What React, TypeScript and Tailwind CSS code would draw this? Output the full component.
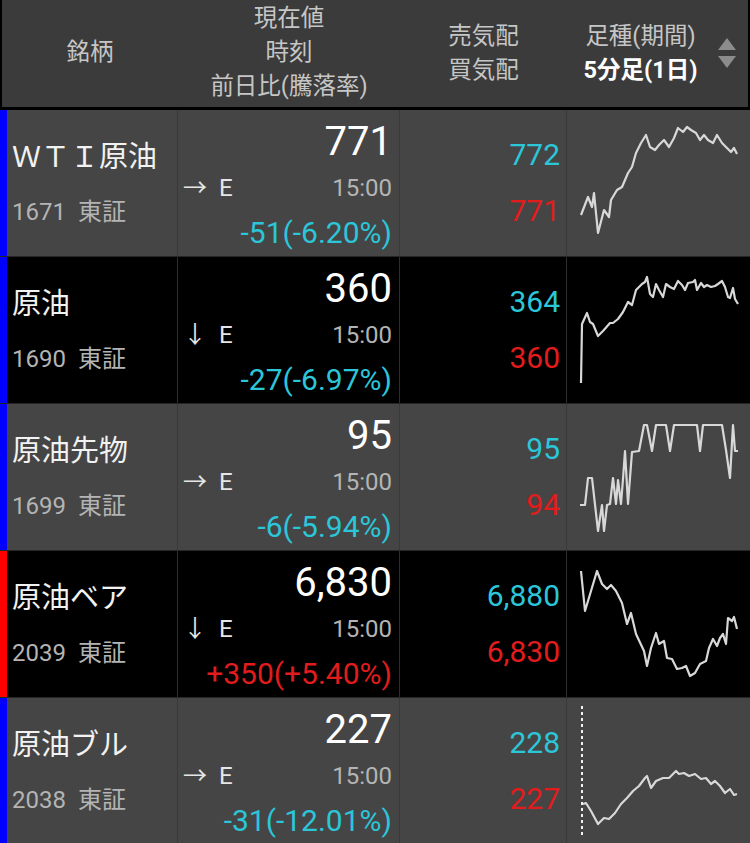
import React from 'react';

type Row = {
  name: string;
  code: string;
  price: string;
  arrow: string;
  change: string;
  up: boolean;
  ask: string;
  bid: string;
  dark: boolean;
  bar: string;
  top: number;
  points: number[][];
  dotted?: boolean;
};

const rows: Row[] = [
  {
    name: 'ＷＴＩ原油',
    code: '1671',
    price: '771',
    arrow: '→',
    change: '-51(-6.20%)',
    up: false,
    ask: '772',
    bid: '771',
    dark: false,
    bar: 'bg-[#0000ff]',
    top: 110,
    points: [
      [581, 215], [588, 197], [592, 207], [594, 193], [598, 233], [604, 210], [609, 217], [611, 200],
      [617, 190], [622, 187], [628, 173], [632, 167], [636, 153], [641, 143], [646, 135], [650, 147],
      [655, 150], [659, 145], [664, 140], [669, 147], [674, 138], [678, 128], [683, 132], [687, 127],
      [691, 130], [696, 133], [700, 140], [704, 135], [708, 140], [713, 143], [717, 135], [722, 143],
      [726, 147], [731, 152], [734, 148], [737, 154],
    ],
  },
  {
    name: '原油',
    code: '1690',
    price: '360',
    arrow: '↓',
    change: '-27(-6.97%)',
    up: false,
    ask: '364',
    bid: '360',
    dark: true,
    bar: 'bg-[#0000ff]',
    top: 256,
    points: [
      [581, 382], [582, 323], [587, 312], [590, 321], [593, 323], [598, 335], [603, 330], [610, 322],
      [613, 322], [618, 318], [623, 311], [628, 301], [632, 304], [636, 289], [642, 283], [645, 281],
      [647, 276], [650, 293], [653, 296], [656, 283], [659, 289], [663, 296], [666, 283], [670, 286],
      [674, 288], [678, 280], [682, 284], [685, 289], [688, 282], [693, 281], [695, 279], [697, 289],
      [701, 282], [704, 286], [707, 284], [711, 286], [715, 285], [718, 283], [722, 280], [725, 286],
      [728, 296], [730, 297], [733, 287], [735, 298], [738, 303],
    ],
  },
  {
    name: '原油先物',
    code: '1699',
    price: '95',
    arrow: '→',
    change: '-6(-5.94%)',
    up: false,
    ask: '95',
    bid: '94',
    dark: false,
    bar: 'bg-[#0000ff]',
    top: 402,
    points: [
      [580, 503], [585, 503], [588, 476], [592, 476], [598, 529], [602, 503], [604, 529], [607, 503],
      [610, 502], [613, 476], [616, 502], [618, 478], [621, 502], [623, 477], [625, 449], [628, 502],
      [632, 450], [639, 449], [644, 423], [647, 423], [652, 449], [656, 423], [666, 423], [670, 449],
      [674, 423], [697, 423], [700, 449], [703, 423], [722, 423], [726, 448], [730, 476], [733, 423],
      [735, 449], [738, 449],
    ],
  },
  {
    name: '原油ベア',
    code: '2039',
    price: '6,830',
    arrow: '↓',
    change: '+350(+5.40%)',
    up: true,
    ask: '6,880',
    bid: '6,830',
    dark: true,
    bar: 'bg-[#ff0000]',
    top: 550,
    points: [
      [581, 570], [585, 610], [591, 590], [597, 570], [602, 583], [607, 588], [611, 584], [616, 590],
      [622, 602], [627, 623], [631, 612], [636, 633], [644, 650], [647, 665], [651, 647], [656, 632],
      [659, 643], [664, 640], [667, 657], [672, 658], [677, 668], [682, 667], [686, 665], [690, 675],
      [695, 672], [700, 663], [706, 660], [709, 647], [713, 638], [717, 645], [720, 637], [723, 633],
      [726, 643], [728, 617], [732, 620], [734, 616], [737, 628],
    ],
  },
  {
    name: '原油ブル',
    code: '2038',
    price: '227',
    arrow: '→',
    change: '-31(-12.01%)',
    up: false,
    ask: '228',
    bid: '227',
    dark: false,
    bar: 'bg-[#0000ff]',
    top: 697,
    dotted: true,
    points: [
      [583, 803], [586, 802], [591, 810], [598, 823], [604, 817], [609, 818], [615, 812], [621, 803],
      [627, 797], [633, 790], [639, 785], [645, 777], [647, 775], [651, 787], [656, 780], [663, 777],
      [669, 777], [676, 770], [679, 773], [684, 772], [689, 775], [695, 773], [701, 778], [706, 777],
      [711, 783], [715, 780], [720, 785], [725, 792], [730, 788], [734, 794], [737, 793],
    ],
  },
];

const font = { fontFamily: 'Roboto, "Noto Sans CJK JP", sans-serif' };

function Chart({ row }: { row: Row }) {
  return (
    <svg viewBox={`567 ${row.top} 183 146`} className="w-full h-full" preserveAspectRatio="none">
      {row.dotted && (
        <line x1={582} y1={705} x2={582} y2={834} stroke="#f2f2f2" strokeWidth={2} strokeDasharray="3 3" />
      )}
      <polyline
        points={row.points.map((p) => p.join(',')).join(' ')}
        fill="none"
        stroke="#d8d8d8"
        strokeWidth={2.2}
        strokeLinejoin="round"
      />
    </svg>
  );
}

function QuoteRow({ row }: { row: Row }) {
  const bg = row.dark ? 'bg-black' : 'bg-[#454545]';
  const line = row.dark ? 'border-[#2e2e2e]' : 'border-[#393939]';
  const changeColor = row.up ? 'text-[#e21c1c]' : 'text-[#2cc6d9]';
  return (
    <div className={`flex h-[147px] border-b border-[#262626] ${bg}`}>
      <div className={`w-[7px] shrink-0 ${row.bar}`} />

      {/* 銘柄 */}
      <div className={`w-[171px] shrink-0 border-r ${line} pl-[5px] pt-[29px] flex flex-col`}>
        <div className="h-[36px] leading-[36px] text-[29px] text-[#f2f2f2] whitespace-nowrap">{row.name}</div>
        <div className="mt-[22px] h-[30px] leading-[30px] text-[24px] text-[#b4b4b4] whitespace-nowrap">
          {row.code}
          <span className="ml-[12px]">東証</span>
        </div>
      </div>

      {/* 現在値 / 時刻 / 前日比 */}
      <div className={`w-[222px] shrink-0 border-r ${line} pl-[5px] pr-[7px] pt-[10px] flex flex-col`}>
        <div className="h-[44px] leading-[44px] text-[40px] text-white text-right">{row.price}</div>
        <div className="mt-[9px] h-[30px] leading-[30px] text-[24px] flex justify-between">
          <span className="text-[#e6e6e6]">
            {row.arrow}
            <span className="ml-[12px]">E</span>
          </span>
          <span className="text-[#b4b4b4]">15:00</span>
        </div>
        <div className={`mt-[12px] h-[36px] leading-[36px] text-[30px] text-right ${changeColor}`}>{row.change}</div>
      </div>

      {/* 気配 */}
      <div className={`w-[167px] shrink-0 border-r ${line} pr-[6px] pt-[27px] flex flex-col items-end`}>
        <div className="h-[36px] leading-[36px] text-[30px] text-[#2cc6d9]">{row.ask}</div>
        <div className="mt-[20px] h-[36px] leading-[36px] text-[30px] text-[#e21c1c]">{row.bid}</div>
      </div>

      {/* チャート */}
      <div className="flex-1">
        <Chart row={row} />
      </div>
    </div>
  );
}

export default function App() {
  return (
    <div className="w-[750px] h-[843px] overflow-hidden bg-black" style={font}>
      {/* Header */}
      <div className="flex h-[110px] bg-[#3b3b3b] border-x-2 border-b-[3px] border-black text-[23.5px] text-[#c6c6c6]">
        <div className="w-[176px] shrink-0 flex items-center justify-center pb-[2px]">銘柄</div>
        <div className="w-[222px] shrink-0 flex flex-col items-center leading-[34px] pt-[1px]">
          <span>現在値</span>
          <span>時刻</span>
          <span>前日比(騰落率)</span>
        </div>
        <div className="w-[167px] shrink-0 flex flex-col items-center justify-center leading-[34px] pb-[2px]">
          <span>売気配</span>
          <span>買気配</span>
        </div>
        <div className="flex-1 flex items-center">
          <div className="flex-1 flex flex-col items-center leading-[34px] pb-[2px] pl-[2px]">
            <span>足種(期間)</span>
            <span className="font-bold text-white">5分足(1日)</span>
          </div>
          <div className="w-[36px] flex flex-col items-center gap-[4px] pr-[6px] pb-[2px]">
            <svg width="20" height="14" viewBox="0 0 20 14">
              <path d="M10 1 L19 13 L1 13 Z" fill="#8c8c8c" />
            </svg>
            <svg width="20" height="14" viewBox="0 0 20 14">
              <path d="M1 1 L19 1 L10 13 Z" fill="#8c8c8c" />
            </svg>
          </div>
        </div>
      </div>

      {rows.map((row) => (
        <QuoteRow key={row.code} row={row} />
      ))}
    </div>
  );
}
